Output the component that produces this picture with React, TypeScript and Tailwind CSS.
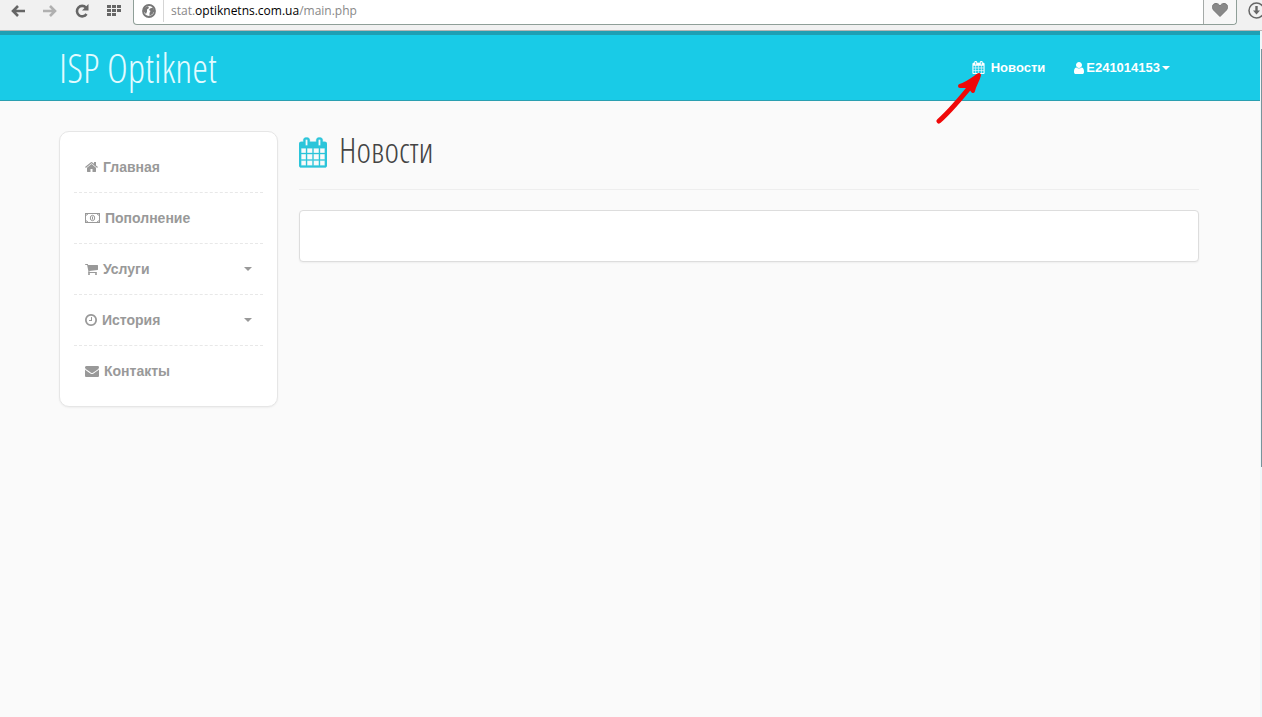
import React from "react";

type IconProps = { className?: string };

const CalendarIcon = ({ className }: IconProps) => (
  <svg viewBox="64 0 1664 1792" fill="currentColor" stroke="currentColor" strokeWidth="20" className={className} aria-hidden="true">
    <path d="M192 1664h288v-288h-288v288zm352 0h320v-288h-320v288zm-352-352h288v-320h-288v320zm352 0h320v-320h-320v320zm-352-384h288v-288h-288v288zm736 736h320v-288h-320v288zm-384-736h320v-288h-320v288zm768 736h288v-288h-288v288zm-384-352h320v-320h-320v320zm-352-864v-288q0-13-9.5-22.5t-22.5-9.5h-64q-13 0-22.5 9.5t-9.5 22.5v288q0 13 9.5 22.5t22.5 9.5h64q13 0 22.5-9.5t9.5-22.5zm736 864h288v-320h-288v320zm-384-384h320v-288h-320v288zm384 0h288v-288h-288v288zm32-480v-288q0-13-9.5-22.5t-22.5-9.5h-64q-13 0-22.5 9.5t-9.5 22.5v288q0 13 9.5 22.5t22.5 9.5h64q13 0 22.5-9.5t9.5-22.5zm384-64v1280q0 52-38 90t-90 38h-1408q-52 0-90-38t-38-90v-1280q0-52 38-90t90-38h128v-96q0-66 47-113t113-47h64q66 0 113 47t47 113v96h384v-96q0-66 47-113t113-47h64q66 0 113 47t47 113v96h128q52 0 90 38t38 90z" />
  </svg>
);

const UserIcon = ({ className }: IconProps) => (
  <svg viewBox="256 0 1280 1792" fill="currentColor" className={className} aria-hidden="true">
    <path d="M1536 1399q0 109-62.5 187t-150.5 78h-854q-88 0-150.5-78t-62.5-187q0-85 8.5-160.5t31.5-152 58.5-131 94-89 134.5-34.5q131 128 313 128t313-128q76 0 134.5 34.5t94 89 58.5 131 31.5 152 8.5 160.5zm-256-887q0 159-112.5 271.5t-271.5 112.5-271.5-112.5-112.5-271.5 112.5-271.5 271.5-112.5 271.5 112.5 112.5 271.5z" />
  </svg>
);

const HomeIcon = () => (
  <svg viewBox="64 0 1664 1792" fill="currentColor" className="h-3.5 w-[13px]" aria-hidden="true">
    <path d="M1472 992v480q0 26-19 45t-45 19h-384v-384h-256v384h-384q-26 0-45-19t-19-45v-480q0-1 .5-3t.5-3l575-474 575 474q1 2 1 6zm223-69l-62 74q-8 9-21 11h-3q-13 0-21-7l-692-577-692 577q-12 8-24 7-13-2-21-11l-62-74q-8-10-7-23.5t11-21.5l719-599q32-26 76-26t76 26l244 204v-195q0-14 9-23t23-9h192q14 0 23 9t9 23v408l219 182q10 8 11 21.5t-7 23.5z" />
  </svg>
);

const MoneyIcon = () => (
  <svg viewBox="0 0 15 14" fill="none" stroke="currentColor" className="h-3.5 w-[15px]" aria-hidden="true">
    <rect x="0.5" y="2.5" width="14" height="9" />
    <path d="M1 4.2A2 2 0 0 0 2.8 3M12.2 3A2 2 0 0 0 14 4.2M1 9.8A2 2 0 0 1 2.8 11M12.2 11A2 2 0 0 1 14 9.8" />
    <ellipse cx="7.5" cy="7" rx="2.2" ry="2.7" />
    <path d="M7.5 5.5v3" />
  </svg>
);

const CartIcon = () => (
  <svg viewBox="64 0 1664 1792" fill="currentColor" className="h-3.5 w-[13px]" aria-hidden="true">
    <path d="M704 1536q0 52-38 90t-90 38-90-38-38-90 38-90 90-38 90 38 38 90zm896 0q0 52-38 90t-90 38-90-38-38-90 38-90 90-38 90 38 38 90zm128-1088v512q0 24-16.5 42.5t-40.5 21.5l-1044 122q13 60 13 70 0 16-24 64h920q26 0 45 19t19 45-19 45-45 19h-1024q-26 0-45-19t-19-45q0-11 8-31.5t16-36 21.5-40 15.5-29.5l-177-823h-204q-26 0-45-19t-19-45 19-45 45-19h256q16 0 28.5 6.5t19.5 15.5 13 24.5 8 26 5.5 29.5 4.5 26h1201q26 0 45 19t19 45z" />
  </svg>
);

const ClockIcon = () => (
  <svg viewBox="128 0 1536 1792" fill="currentColor" className="h-3.5 w-3" aria-hidden="true">
    <path d="M1024 544v448q0 14-9 23t-23 9h-320q-14 0-23-9t-9-23v-64q0-14 9-23t23-9h224v-352q0-14 9-23t23-9h64q14 0 23 9t9 23zm416 352q0-148-73-273t-198-198-273-73-273 73-198 198-73 273 73 273 198 198 273 73 273-73 198-198 73-273zm224 0q0 209-103 385.5t-279.5 279.5-385.5 103-385.5-103-279.5-279.5-103-385.5 103-385.5 279.5-279.5 385.5-103 385.5 103 279.5 279.5 103 385.5z" />
  </svg>
);

const MailIcon = () => (
  <svg viewBox="0 0 1792 1792" fill="currentColor" className="h-3.5 w-3.5" aria-hidden="true">
    <path d="M1792 710v794q0 66-47 113t-113 47h-1472q-66 0-113-47t-47-113v-794q44 49 101 87 362 246 497 345 57 42 92.5 65.5t94.5 48 110 24.5h2q51 0 110-24.5t94.5-48 92.5-65.5q170-123 498-345 57-39 100-87zm0-294q0 79-49 151t-122 123q-376 261-468 325-10 7-42.5 31t-54 38.5-52 32.5-57.5 27-50 9h-2q-23 0-50-9t-57.5-27-52-32.5-54-38.5-42.5-31q-91-64-262-182.5t-205-142.5q-62-42-117-115.5t-55-136.5q0-78 41.5-130t118.5-52h1472q65 0 112.5 47t47.5 113z" />
  </svg>
);

const Caret = () => (
  <svg viewBox="0 0 8 4" fill="currentColor" className="h-1 w-2" aria-hidden="true">
    <path d="M0 0h8L4 4z" />
  </svg>
);

const menu = [
  { label: "Главная", icon: <HomeIcon />, sub: false },
  { label: "Пополнение", icon: <MoneyIcon />, sub: false },
  { label: "Услуги", icon: <CartIcon />, sub: true },
  { label: "История", icon: <ClockIcon />, sub: true },
  { label: "Контакты", icon: <MailIcon />, sub: false },
];

const BrowserBar = () => (
  <div className="flex h-[31px] items-start overflow-hidden border-b border-[#b5b5b5] bg-[#f1f1f1] text-[#666]">
    <div className="flex h-[22px] w-[133px] shrink-0 items-center gap-[18px] pl-[11px]">
      <button aria-label="Назад">
        <svg viewBox="0 0 14 14" className="block h-3.5 w-3.5" fill="none" stroke="currentColor" strokeWidth="2.6">
          <path d="M14 7H2M7 2L2 7l5 5" />
        </svg>
      </button>
      <button aria-label="Вперёд" className="text-[#b0b0b0]">
        <svg viewBox="0 0 14 14" className="block h-3.5 w-3.5" fill="none" stroke="currentColor" strokeWidth="2.6">
          <path d="M0 7h12M7 2l5 5-5 5" />
        </svg>
      </button>
      <button aria-label="Обновить">
        <svg viewBox="0 0 14 14" className="block h-3.5 w-3.5" fill="none" stroke="currentColor" strokeWidth="2.6">
          <path d="M11.5 10A5.2 5.2 0 1 1 11 3.6" />
          <path d="M13.5 0v6.5H7z" fill="currentColor" stroke="none" />
        </svg>
      </button>
      <button aria-label="Экспресс-панель">
        <svg viewBox="0 0 14 14" className="block h-3.5 w-3.5" fill="currentColor">
          <path d="M0 1h4v3H0zM5 1h4v3H5zM10 1h4v3h-4zM0 5h4v3H0zM5 5h4v3H5zM10 5h4v3h-4zM0 9h4v3H0zM5 9h4v3H5z" />
        </svg>
      </button>
    </div>
    <div className="flex h-[25px] min-w-0 grow rounded-b border border-t-0 border-[#8f9f98] bg-white">
      <div className="flex h-[22px] w-[30px] shrink-0 items-center justify-center border-r border-[#d5d5d5] text-[#777]">
        <svg viewBox="0 0 14 14" className="h-3.5 w-3.5" fill="none" stroke="currentColor">
          <circle cx="7" cy="7" r="6" strokeWidth="1.8" />
          <path d="M2 4l4-2 1 2-2 1.500v2l-1 2.500-2-2zM8 4.500l3-1 1.500 3.500-2 3-3 2v-3l1-2-1.500-1z" fill="currentColor" stroke="none" />
        </svg>
      </div>
      <div
        role="textbox"
        aria-label="Адрес"
        className="h-[22px] min-w-0 grow pl-[7px] font-['Open_Sans','Noto_Sans',sans-serif] text-xs leading-[22px] text-[#888]"
      >
        stat.<span className="text-black">optiknetns.com.ua</span>/main.php
      </div>
      <button aria-label="В закладки" className="flex w-[33px] justify-center rounded-br border-l border-[#a5aaa8] bg-[#f7f7f7] pt-[3px] text-[#888]">
        <svg viewBox="0 0 16 14" className="h-3.5 w-4" fill="currentColor" stroke="#777">
          <path d="M8 13.500L1.500 7C-1 3.500 1 .5 4 .5c2 0 3.200 1 4 2.500C8.800 1.500 10 .5 12 .5c3 0 5 3 2.500 6.500z" />
        </svg>
      </button>
    </div>
    <button aria-label="Загрузки" className="-mr-[3px] ml-[11px] mt-0.5 shrink-0">
      <svg viewBox="0 0 17 17" className="h-[17px] w-[17px]" fill="none" stroke="currentColor">
        <circle cx="8.500" cy="8.500" r="7.500" strokeWidth="1.500" />
        <path d="M8.500 4v5" strokeWidth="2.400" />
        <path d="M5 8.500h7l-3.500 4z" fill="currentColor" stroke="none" />
      </svg>
    </button>
  </div>
);

const Header = () => (
  <header className="border-b border-t-4 border-b-[#2a9fb0] border-t-[#1f9fb4] bg-[#19cbe7] pl-[59px] pr-[61px] text-white">
    <div className="relative flex h-[65px] items-center justify-between">
      <a
        href="#"
        className="font-['Open_Sans_Condensed_Light','Open_Sans_Light_Condensed','Liberation_Sans_Narrow','Open_Sans',sans-serif] text-[40px] font-light leading-[64px] text-[#e3fbff]"
      >
        ISP Optiknet
      </a>
      <nav className="flex items-center gap-[29px] pr-[29px] text-[13px] font-bold">
        <a href="#" className="flex items-center gap-1.5">
          <CalendarIcon className="h-[13px] w-[13px]" />
          Новости
        </a>
        <button className="flex items-center gap-0.5 font-bold">
          <UserIcon className="h-3.5 w-2.5" />
          E241014153
          <Caret />
        </button>
      </nav>
      {/* pointer to the news link */}
      <svg viewBox="0 0 46 54" className="absolute right-[217px] top-[36px] h-[54px] w-[46px]" fill="none" stroke="#f00808" strokeLinecap="round" strokeLinejoin="round" aria-hidden="true">
        <path d="M3 50C12 42 22 31 38 11" strokeWidth="5" />
        <path d="M24 15C31 13 37 8 43 4C42 9 38 14 37 20L33 15z" fill="#f00808" strokeWidth="4" />
      </svg>
    </div>
  </header>
);

const Sidebar = () => (
  <nav className="w-[219px] shrink-0 rounded-[10px] border border-[#e6e6e6] bg-white px-3.5 py-2.5 shadow-xs">
    <ul>
      {menu.map((item) => (
        <li key={item.label} className="border-b border-dashed border-[#e8e8e8] last:border-b-0">
          <a href="#" className="flex h-[50px] items-center gap-[5px] px-[11px] text-sm font-bold text-[#999]">
            {item.icon}
            <span className="grow">{item.label}</span>
            {item.sub && <Caret />}
          </a>
        </li>
      ))}
    </ul>
  </nav>
);

const App = () => {
  return (
    <div className="flex min-h-screen flex-col bg-[#fafafa] font-['Liberation_Sans',Arial,sans-serif]">
      <BrowserBar />
      <div className="flex grow">
        <div className="min-w-0 grow">
          <Header />
          <div className="flex items-start gap-[21px] pl-[59px] pr-[61px] pt-[30px]">
            <Sidebar />
            <main className="min-w-0 grow">
              <h1 className="flex h-[59px] items-start gap-3 border-b border-[#eee] font-['Open_Sans_Condensed_Light','Open_Sans_Light_Condensed','Liberation_Sans_Narrow','Open_Sans',sans-serif] text-[35px] font-light leading-[38px] text-[#444]">
                <CalendarIcon className="mt-1.5 h-[31px] w-[28px] text-[#2cc5da]" />
                Новости
              </h1>
              <section className="mt-5 h-[52px] rounded border border-[#ddd] bg-white shadow-xs" />
            </main>
          </div>
        </div>
        {/* scrollbar edge */}
        <div className="w-0.5 shrink-0 bg-[#eef8fa] pl-px pt-[18px]">
          <div className="h-[418px] bg-[#78949b]" />
        </div>
      </div>
    </div>
  );
};

export default App;
